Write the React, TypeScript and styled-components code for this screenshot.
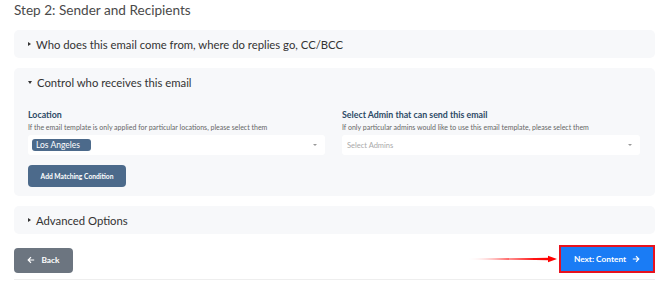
import styled, { createGlobalStyle } from "styled-components";

const GlobalStyle = createGlobalStyle`
  body {
    margin: 0;
    background: #ffffff;
    font-family: Lato, "Noto Sans", sans-serif;
    color: #333;
  }
`;

const Page = styled.div`
  width: 670px;
  padding: 0 15px 0 14px;
  box-sizing: border-box;
`;

const Title = styled.h2`
  margin: 0;
  padding-top: 1px;
  height: 29px;
  font-size: 13.6px;
  font-weight: 400;
  color: #4a4a4a;
  line-height: 18px;
`;

const Panel = styled.section`
  background: #f7f8fa;
  border-radius: 5px;
  margin-bottom: 10px;
  padding: 0 14px;
`;

const PanelHeader = styled.div`
  height: 28px;
  display: flex;
  align-items: center;
  gap: 5px;
  font-size: 11.3px;
  color: #333;
`;

const Caret = styled.span<{ $open?: boolean }>`
  width: 0;
  height: 0;
  border-style: solid;
  ${(p) =>
    p.$open
      ? "border-width: 3px 2.5px 0 2.5px; border-color: #333 transparent transparent transparent;"
      : "border-width: 2.5px 0 2.5px 3px; border-color: transparent transparent transparent #333;"}
`;

const PanelBody = styled.div`
  display: grid;
  grid-template-columns: 297px 298px;
  column-gap: 17px;
  height: 100px;
  padding-top: 12px;
  box-sizing: border-box;
`;

const Field = styled.div`
  display: flex;
  flex-direction: column;
`;

const Label = styled.div`
  font-size: 8.8px;
  font-weight: 700;
  color: #2d4a66;
  line-height: 13px;
`;

const Help = styled.div`
  font-size: 7px;
  color: #666;
  margin-top: 1px;
  line-height: 10px;
`;

const Select = styled.div`
  margin-top: 3px;
  height: 20px;
  background: #fff;
  border-radius: 3px;
  display: flex;
  align-items: center;
  padding: 0 8px 0 4px;
  box-sizing: border-box;
`;

const Placeholder = styled.span`
  flex: 1;
  font-size: 7.5px;
  color: #aaa;
  padding-left: 1px;
`;

const Chip = styled.span`
  background: #4c6a8b;
  color: #fff;
  font-size: 8.5px;
  border-radius: 3px;
  padding: 0 11px 0 4px;
  height: 12px;
  line-height: 12px;
`;

const Spacer = styled.span`
  flex: 1;
`;

const DropArrow = styled.span`
  width: 0;
  height: 0;
  border-style: solid;
  border-width: 2.5px 2px 0 2px;
  border-color: #999 transparent transparent transparent;
`;

const MatchButton = styled.button`
  margin-top: 10px;
  width: 98px;
  height: 22px;
  border: none;
  border-radius: 4px;
  background: #4c6a8b;
  color: #fff;
  font-family: inherit;
  font-size: 6.7px;
  font-weight: 700;
  padding: 0;
`;

const Footer = styled.div`
  display: flex;
  align-items: center;
  justify-content: space-between;
  margin-top: -3px;
  height: 38px;
  border-bottom: 1px solid #eee;
`;

const Button = styled.button<{ $primary?: boolean }>`
  display: flex;
  align-items: center;
  justify-content: center;
  gap: 6px;
  border-radius: 4px;
  border: none;
  font-family: inherit;
  font-weight: 700;
  font-size: 8.3px;
  color: #fff;
  height: 25px;
  background: ${(p) => (p.$primary ? "#1a7cf5" : "#6c7580")};
  width: ${(p) => (p.$primary ? "96px" : "59px")};
  ${(p) => p.$primary && "border: 2px solid #e8121e; border-radius: 0; height: 28px; box-sizing: border-box;"}
`;

const NextGroup = styled.div`
  display: flex;
  align-items: center;
  gap: 2px;
  margin-top: -3px;
`;

const Arrow = ({ dir }: { dir: "left" | "right" }) => (
  <svg width="8" height="8" viewBox="0 0 10 10" fill="none" stroke="#fff" strokeWidth="1.5">
    {dir === "left" ? (
      <path d="M9 5H1.5M5 1.5L1.5 5 5 8.5" />
    ) : (
      <path d="M1 5h7.5M5 1.5L8.5 5 5 8.5" />
    )}
  </svg>
);

const Pointer = () => (
  <svg width="90" height="8" viewBox="0 0 90 8">
    <defs>
      <linearGradient id="fade" x1="0" x2="1">
        <stop offset="0" stopColor="#ff0000" stopOpacity="0" />
        <stop offset="0.5" stopColor="#ff0000" stopOpacity="0.8" />
        <stop offset="1" stopColor="#ff0000" />
      </linearGradient>
    </defs>
    <polygon points="0,4 82,2.8 82,5.2" fill="url(#fade)" />
    <polygon points="81,0.8 90,4 81,7.2" fill="#ff0000" />
  </svg>
);

export default function App() {
  return (
    <Page>
      <GlobalStyle />
      <Title>Step 2: Sender and Recipients</Title>
      <Panel>
        <PanelHeader>
          <Caret />
          Who does this email come from, where do replies go, CC/BCC
        </PanelHeader>
      </Panel>
      <Panel>
        <PanelHeader>
          <Caret $open />
          Control who receives this email
        </PanelHeader>
        <PanelBody>
          <Field>
            <Label>Location</Label>
            <Help>If the email template is only applied for particular locations, please select them</Help>
            <Select>
              <Chip>Los Angeles</Chip>
              <Spacer />
              <DropArrow />
            </Select>
            <MatchButton>Add Matching Condition</MatchButton>
          </Field>
          <Field>
            <Label>Select Admin that can send this email</Label>
            <Help>If only particular admins would like to use this email template, please select them</Help>
            <Select>
              <Placeholder>Select Admins</Placeholder>
              <DropArrow />
            </Select>
          </Field>
        </PanelBody>
      </Panel>
      <Panel>
        <PanelHeader>
          <Caret />
          Advanced Options
        </PanelHeader>
      </Panel>
      <Footer>
        <Button>
          <Arrow dir="left" />
          Back
        </Button>
        <NextGroup>
          <Pointer />
          <Button $primary>
            Next: Content
            <Arrow dir="right" />
          </Button>
        </NextGroup>
      </Footer>
    </Page>
  );
}
